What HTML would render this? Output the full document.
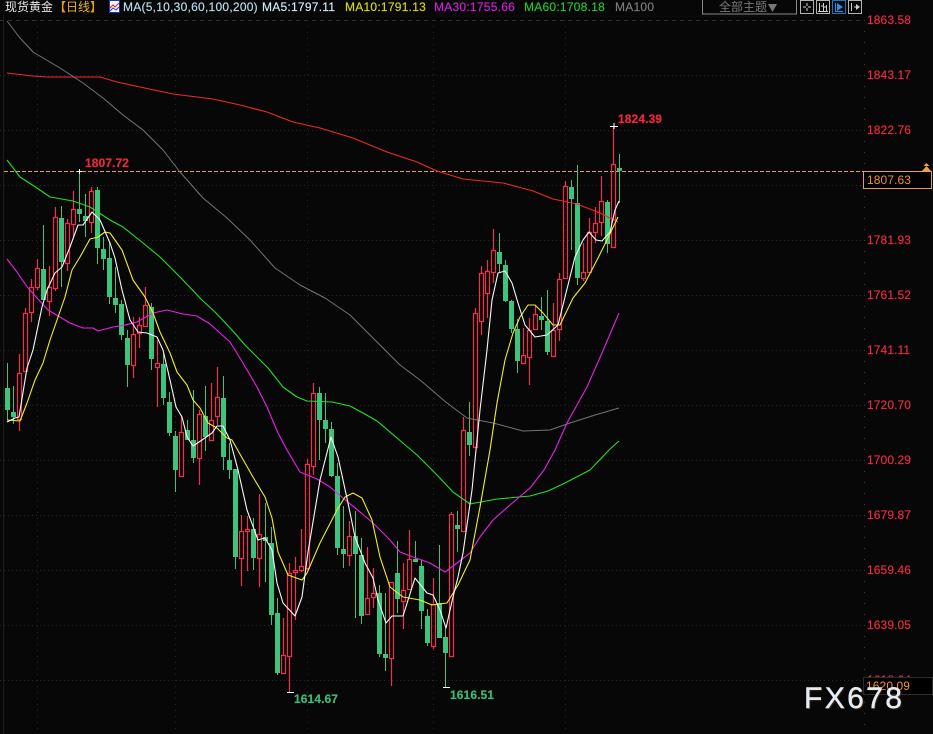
<!DOCTYPE html>
<html lang="zh"><head><meta charset="utf-8"><title>现货黄金</title>
<style>
html,body{margin:0;padding:0;background:#070707}
#c{position:relative;width:933px;height:734px;overflow:hidden;background:#070707;font-family:"Liberation Sans","Noto Sans CJK SC",sans-serif;font-size:12px}
#c svg{position:absolute;left:0;top:0}
.t{position:absolute;white-space:nowrap;line-height:14px}
.h{top:0;letter-spacing:.25px;-webkit-text-stroke:.15px currentColor}
.p{left:867px;color:#ee2a40;letter-spacing:.1px;-webkit-text-stroke:.15px currentColor}
.b{font-weight:bold;letter-spacing:.1px;-webkit-text-stroke:.2px currentColor}
polyline{stroke-linejoin:round}
</style></head><body><div id="c">
<svg width="933" height="734" viewBox="0 0 933 734" fill="none">
<path d="M3.5 15V734" stroke="#1c1c1c"/>
<path d="M0 20.5H864" stroke="#303030" stroke-dasharray="4 4"/>
<path d="M0 75.5H864M0 130.5H864M0 185.5H864M0 240.5H864M0 295.5H864M0 350.5H864M0 405.5H864M0 460.5H864M0 515.5H864M0 570.5H864M0 625.5H864M0 680.5H864" stroke="#262626" stroke-dasharray="1 3"/>
<path d="M37.5 20V734M175.5 20V734M307.5 20V734M433.5 20V734M565.5 20V734" stroke="#262626" stroke-dasharray="1 5"/>
<path d="M864.5 20V734" stroke="#3a3a3a" stroke-dasharray="1 10"/>
<path d="M4 171.5H864" stroke="#ea9e48" stroke-dasharray="4 2"/>
<!-- green candles: wicks -->
<path stroke="#3cc47c" d="M7.5 363V420M13.5 386V424M43.5 225V300M61.5 206V287M79.5 174V222M85.5 194V237M97.5 187V264M103.5 237V270M109.5 243V304M115.5 267V313M121.5 300V340M127.5 330V387M151.5 303V370M163.5 353V405M169.5 392V436M175.5 431V492M187.5 420V440M193.5 390V463M205.5 386V451M223.5 376V470M229.5 443V479M235.5 469V569M253.5 518V570M265.5 503V582M271.5 527V625M277.5 598V675M319.5 387V460M325.5 393V443M331.5 422V477M337.5 463V555M343.5 506V568M355.5 511V618M361.5 538V624M379.5 585V657M385.5 593V671M397.5 541V613M415.5 541V562M421.5 560V629M427.5 609V646M439.5 545V638M445.5 627V688M457.5 511V552M469.5 402V456M499.5 233V272M505.5 260V302M511.5 300V333M517.5 319V373M541.5 297V330M547.5 290V355M571.5 180V250M577.5 165V285M607.5 200V253M619.5 154V203"/>
<!-- green candles: bodies -->
<path stroke="#3cc47c" stroke-width="5" d="M7.5 388V410M13.5 412V417M43.5 269V300M61.5 218V262M79.5 209V214M85.5 216V221M97.5 190V248M103.5 249V259M109.5 258V297M115.5 298V305M121.5 304V335M127.5 338V365M151.5 307V359M163.5 364V398M169.5 402V433M175.5 436V470M187.5 430V440M193.5 440V458M205.5 416V437M223.5 398V457M229.5 460V470M235.5 469V557M253.5 529V558M265.5 537V541M271.5 543V615M277.5 613V673M319.5 393V420M325.5 420V429M331.5 429V476M337.5 476V548M343.5 549V554M355.5 536V554M361.5 555V616M379.5 593V654M385.5 654V658M397.5 573V599M415.5 559V562M421.5 566V611M427.5 616V643M439.5 603V638M445.5 637V653M457.5 525V529M469.5 432V445M499.5 252V264M505.5 265V301M511.5 301V329M517.5 329V361M541.5 316V320M547.5 321V352M571.5 187V199M577.5 203V278M607.5 202V244M619.5 168V171"/>
<!-- red candles -->
<path stroke="#f0304c" stroke-width="1.2" d="M19.5 354V373M19.5 419V431M17.5 373.5h4v46h-4z
M25.5 308V313M23.5 313.5h4v58h-4z
M31.5 279V287M31.5 312V322M29.5 287.5h4v25h-4z
M37.5 259V268M37.5 287V290M35.5 268.5h4v19h-4z
M49.5 266V287M49.5 301V316M47.5 287.5h4v14h-4z
M55.5 207V217M55.5 288V291M53.5 217.5h4v71h-4z
M67.5 219V223M67.5 263V271M65.5 223.5h4v40h-4z
M73.5 191V209M73.5 224V238M71.5 209.5h4v15h-4z
M91.5 187V191M91.5 222V233M89.5 191.5h4v31h-4z
M133.5 317V334M133.5 365V378M131.5 334.5h4v31h-4z
M139.5 317V325M139.5 333V348M137.5 325.5h4v8h-4z
M145.5 287V305M145.5 326V327M143.5 305.5h4v21h-4z
M157.5 340V363M157.5 367V407M155.5 363.5h4v4h-4z
M181.5 415V432M179.5 432.5h4v44h-4z
M199.5 410V414M199.5 458V485M197.5 414.5h4v44h-4z
M211.5 383V420M211.5 440V441M209.5 420.5h4v20h-4z
M217.5 367V397M217.5 416V425M215.5 397.5h4v19h-4z
M241.5 515V531M241.5 558V586M239.5 531.5h4v27h-4z
M247.5 516V529M247.5 531V571M245.5 529.5h4v2h-4z
M259.5 494V534M259.5 558V587M257.5 534.5h4v24h-4z
M283.5 618V655M281.5 655.5h4v18h-4z
M289.5 563V573M289.5 656V692M287.5 573.5h4v83h-4z
M295.5 557V570M295.5 572V620M293.5 570.5h4v2h-4z
M301.5 529V566M301.5 570V572M299.5 566.5h4v4h-4z
M307.5 459V464M307.5 568V570M305.5 464.5h4v104h-4z
M313.5 383V393M313.5 466V475M311.5 393.5h4v73h-4z
M349.5 521V536M349.5 555V566M347.5 536.5h4v19h-4z
M367.5 547V598M365.5 598.5h4v16h-4z
M373.5 568V593M373.5 597V608M371.5 593.5h4v4h-4z
M391.5 658V686M389.5 582.5h4v76h-4z
M403.5 563V590M403.5 601V629M401.5 590.5h4v11h-4z
M409.5 530V559M407.5 559.5h4v30h-4z
M433.5 578V604M433.5 646V649M431.5 604.5h4v42h-4z
M451.5 512V514M449.5 514.5h4v142h-4z
M463.5 417V430M461.5 430.5h4v101h-4z
M475.5 308V313M473.5 313.5h4v134h-4z
M481.5 266V273M481.5 321V335M479.5 273.5h4v48h-4z
M487.5 260V271M487.5 293V318M485.5 271.5h4v22h-4z
M493.5 229V250M493.5 272V283M491.5 250.5h4v22h-4z
M523.5 328V355M521.5 355.5h4v8h-4z
M529.5 318V330M529.5 357V385M527.5 330.5h4v27h-4z
M535.5 305V314M535.5 329V330M533.5 314.5h4v15h-4z
M553.5 303V330M551.5 330.5h4v26h-4z
M559.5 273V279M559.5 329V341M557.5 279.5h4v50h-4z
M565.5 181V186M563.5 186.5h4v92h-4z
M583.5 243V272M583.5 278V281M581.5 272.5h4v6h-4z
M589.5 218V232M589.5 272V273M587.5 232.5h4v40h-4z
M595.5 207V223M595.5 232V243M593.5 223.5h4v9h-4z
M601.5 176V201M601.5 222V236M599.5 201.5h4v21h-4z
M613.5 127V164M611.5 164.5h4v83h-4z"/>
<!-- MA200 -->
<polyline stroke="#f02828" stroke-width="1.1" points="7,73 33,76 47,77 73,77 100,77 117,82 140,87 173,94 213,99 240,105 267,112 293,122 320,128 353,138 387,152 417,162 437,171 463,179 503,183 533,191 553,199 577,204 600,213 618,222"/>
<!-- MA100 -->
<polyline stroke="#747474" points="7,21 20,38 33,52 60,68 83,83 103,98 123,115 143,130 163,150 180,172 203,198 227,218 250,240 275,268 300,285 325,298 350,315 375,340 400,365 420,380 447,403 467,418 493,423 523,431 550,430 570,423 595,415 619,408"/>
<!-- MA60 -->
<polyline stroke="#22e022" stroke-width="1.1" points="7,160 20,177 37,188 50,197 73,201 90,207 110,220 123,227 143,243 160,257 180,277 202,300 215,312 232,330 245,345 257,357 268,368 283,387 297,397 307,401 332,402 350,406 363,413 377,421 397,438 417,455 437,475 453,492 470,504 497,499 530,496 548,491 565,483 590,470 610,449 619,441"/>
<!-- MA30 -->
<polyline stroke="#e820e8" stroke-width="1.1" points="7,259 17,272 28,288 48,310 70,323 83,328 93,328 98,331 113,327 125,325 137,322 153,313 167,310 183,314 197,316 210,324 230,342 243,363 257,387 267,407 278,433 287,450 300,472 317,479 330,487 343,498 360,512 373,523 390,540 400,552 413,557 430,563 445,572 457,563 470,553 480,537 493,520 510,505 530,488 544,470 555,450 567,423 587,387 602,353 619,313"/>
<!-- MA10 -->
<polyline stroke="#f0f020" stroke-width="1.1" points="7,420 20,421 27,403 35,380 43,363 50,340 57,320 65,297 72,270 80,257 90,239 98,237 105,232 110,233 122,250 133,280 145,297 153,313 160,332 170,353 177,372 187,385 193,400 200,408 208,423 217,428 227,438 232,440 245,463 253,477 265,497 272,518 278,552 288,575 302,580 307,573 320,543 337,510 345,497 353,493 362,498 372,520 380,557 390,587 403,597 420,600 432,605 447,603 458,585 470,560 480,507 490,450 497,403 505,360 513,333 520,317 528,305 535,305 543,313 553,325 560,325 573,298 585,283 597,260 607,240 618,217"/>
<!-- MA5 -->
<polyline stroke="#f8f8f8" stroke-width="1.1" points="7,422 15,418 19,417 27,368 33,350 42,307 47,290 55,273 62,267 70,247 78,225 83,225 92,212 100,220 110,243 115,258 122,290 130,320 138,332 147,333 157,337 163,350 170,380 176,407 182,417 187,437 193,446 202,440 212,433 217,426 223,426 230,440 238,470 247,510 258,540 265,538 272,550 277,583 283,603 295,616 302,597 308,552 320,480 331,437 338,457 348,503 355,537 365,563 373,578 378,600 386,623 392,616 403,616 415,578 427,593 433,595 440,610 446,628 453,597 458,577 463,553 472,490 480,410 487,350 492,300 498,273 505,271 512,283 518,303 525,325 535,337 547,335 558,325 565,297 575,257 583,240 589,232 596,240 602,241 610,232 615,210 619,201"/>
<!-- extreme markers -->
<path stroke="#fff" d="M77 171.5H82M79.5 169V174M610 126.5H618M614 123V129M287 692.5H294M443 687.5H450"/>
<!-- header icon -->
<rect x="109.5" y=".5" width="10" height="12" fill="#f4f4f4" stroke="#1838b0"/>
<path d="M110 8L113 5L115 7L119 3" stroke="#e02020"/><path d="M110 11L113 8L116 10L119 7" stroke="#2040d0"/>
<!-- top buttons -->
<rect x="702.5" y="-1" width="94" height="15" stroke="#8a8a8a"/>
<path fill="#787878" d="M768 4H777L772.5 12z"/>
<rect x="800.5" y=".5" width="13" height="13" stroke="#b4b4b4"/>
<path stroke="#d0d0d0" d="M807 3V6M807 8V11M803 7H806M808 7H811"/>
<rect x="816.5" y=".5" width="13" height="13" stroke="#b4b4b4"/>
<path stroke="#d0d0d0" d="M819.5 3V11M823.5 3V11M826.5 5V11M818 11.5H828M821 6H823M824 7H826"/>
<rect x="832.5" y=".5" width="13" height="13" stroke="#1478c8"/>
<path stroke="#2a90e0" d="M835.5 3V11.5H843"/><path fill="#2a90e0" d="M837 3L843 7L837 11z"/>
<rect x="848.5" y=".5" width="13" height="13" stroke="#b4b4b4"/>
<path stroke="#d0d0d0" d="M851.5 3V11M854 7H858"/><path fill="#d0d0d0" d="M856 4L860 7L856 10z"/>
<!-- price marker -->
<path fill="#f0a040" d="M926.5 163L929.5 166H923.5zM926.5 166L931 171H922z"/>
<rect x="863.5" y="171.5" width="68" height="17" fill="#000" stroke="#f0a040"/>
</svg>

<div class="t" style="left:5px;top:0;color:#e6e6e6;font-size:12px">现货黄金</div>
<div class="t" style="left:54px;top:0;color:#e89a20;font-size:12px;font-weight:bold">【<span style="color:#e8b030;font-weight:normal">日线</span>】</div>
<div class="t h" style="left:123px;color:#b8def0">MA(5,10,30,60,100,200)</div>
<div class="t h" style="left:262px;color:#cfeaf8">MA5:1797.11</div>
<div class="t h" style="left:345px;color:#d8d810">MA10:1791.13</div>
<div class="t h" style="left:434px;color:#d020d8">MA30:1755.66</div>
<div class="t h" style="left:524px;color:#20c830">MA60:1708.18</div>
<div class="t h" style="left:615px;color:#7c7c7c">MA100</div>
<div class="t" style="left:719px;top:0;color:#7a7a7a;font-size:12px">全部主题</div>

<div class="t p" style="top:13px">1863.58</div>
<div class="t p" style="top:68px">1843.17</div>
<div class="t p" style="top:123px">1822.76</div>
<div class="t" style="left:867px;top:173px;color:#ee9428;letter-spacing:.1px">1807.63</div>
<div class="t p" style="top:233px">1781.93</div>
<div class="t p" style="top:288px">1761.52</div>
<div class="t p" style="top:343px">1741.11</div>
<div class="t p" style="top:398px">1720.70</div>
<div class="t p" style="top:453px">1700.29</div>
<div class="t p" style="top:508px">1679.87</div>
<div class="t p" style="top:563px">1659.46</div>
<div class="t p" style="top:618px">1639.05</div>
<div class="t p" style="top:673px">1618.64</div>
<div style="position:absolute;left:863px;top:677px;width:68px;height:16px;background:#000;border:1px solid #2c2c2c"></div>
<div class="t" style="left:866px;top:679px;color:#ee9428;letter-spacing:.1px">1620.09</div>

<div class="t b" style="left:85px;top:156px;color:#e8283c">1807.72</div>
<div class="t b" style="left:618px;top:112px;color:#f0283c">1824.39</div>
<div class="t b" style="left:294px;top:692px;color:#3cb878">1614.67</div>
<div class="t b" style="left:450px;top:688px;color:#3cb878">1616.51</div>

<div class="t" style="left:804px;top:682px;font-size:30px;line-height:34px;letter-spacing:2.4px;color:#e4ecf6;-webkit-text-stroke:.4px #e4ecf6;text-shadow:1px 1px 1px rgba(120,70,20,.6)">FX678</div>
</div></body></html>
